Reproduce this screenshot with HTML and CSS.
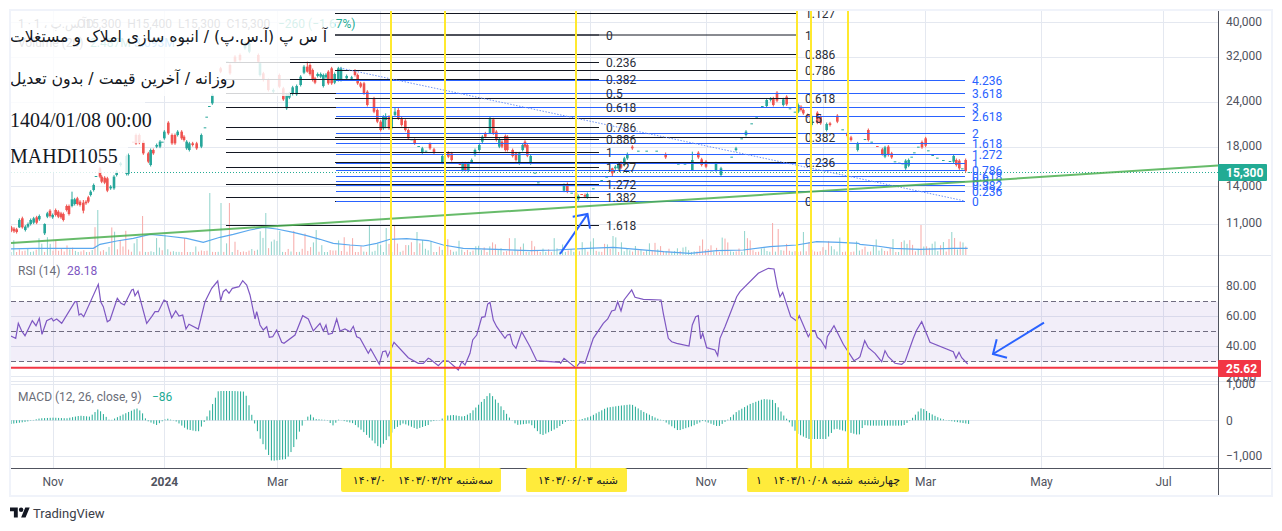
FILE: index.html
```html
<!DOCTYPE html>
<html lang="en">
<head>
	<meta charset="UTF-8">
	<title>TradingView chart</title>
	<link rel="stylesheet" href="styles.css">
</head>
<body>
	<div class="page">
		<div class="chart">
			<svg class="plot" id="plot" width="1260" height="484" viewBox="11 11 1260 484">
				<g id="grid"></g>
				<rect class="rsi-band" x="11" y="301.5" width="1207.5" height="60"></rect>
				<line class="rsi-dash" x1="11" x2="1218" y1="301.5" y2="301.5"></line>
				<line class="rsi-dash" x1="11" x2="1218" y1="331.5" y2="331.5"></line>
				<line class="rsi-dash" x1="11" x2="1218" y1="361.5" y2="361.5"></line>
				<g id="volume"></g>
				<polyline class="vol-ma" id="volma"></polyline>
				<polyline class="rsi-line" id="rsi"></polyline>
				<g id="macd"></g>
				<line class="last-price" x1="11" x2="1218" y1="172.5" y2="172.5"></line>
				<g id="candles"></g>

				<text class="legend" x="18" y="28">آ.س.پ ، 1 · 1D</text>
				<text class="legend" x="77" y="28">O15,300  H15,400  L15,300  C15,300</text>
				<text class="legend green" x="278" y="28">−260 (−1.67%)</text>
				<text class="legend" x="18" y="47">Volume (20)</text>
				<text class="legend green" x="90" y="47">2.487M</text>
				<text class="legend blue" x="134" y="47">3.093M</text>
				<text class="legend" x="18" y="275">RSI (14)</text>
				<text class="legend purple" x="67" y="275">28.18</text>
				<text class="legend" x="18" y="401">MACD (12, 26, close, 9)</text>
				<text class="legend green" x="152" y="401">−86</text>

				<g id="fibs"></g>
				<rect class="veil" x="11" y="11" width="324" height="39"></rect>
				<rect class="veil" x="11" y="50" width="279" height="46"></rect>
				<rect class="veil" x="11" y="96" width="134" height="47"></rect>
				<rect class="veil" x="11" y="143" width="117" height="30"></rect>
				<g id="fiblabels"></g>

				<line class="trend" x1="340" y1="68" x2="965" y2="201"></line>
				<line class="support" x1="11" y1="243" x2="1218" y2="165.6"></line>
				<polyline class="arrow" points="560,254 587.5,214"></polyline>
				<polyline class="arrow" points="572.7,216.7 587.5,214 590,228.7"></polyline>
				<polyline class="arrow" points="1044,322.7 993,354"></polyline>
				<polyline class="arrow" points="996.7,339.3 993,354 1007,357.7"></polyline>

				<line class="marker" x1="391" x2="391" y1="11" y2="469"></line>
				<line class="marker" x1="445" x2="445" y1="11" y2="469"></line>
				<line class="marker" x1="576" x2="576" y1="11" y2="469"></line>
				<line class="marker" x1="797" x2="797" y1="11" y2="469"></line>
				<line class="marker" x1="811" x2="811" y1="11" y2="469"></line>
				<line class="marker" x1="848" x2="848" y1="11" y2="469"></line>

				<line class="rsi-limit" x1="11" x2="1218" y1="367.8" y2="367.8"></line>

				<text class="note rtl" x="327" y="42" textLength="317" lengthAdjust="spacingAndGlyphs">آ س پ (آ.س.پ) / انبوه سازی املاک و مستغلات</text>
				<text class="note rtl" x="235" y="84" textLength="225" lengthAdjust="spacingAndGlyphs">روزانه / آخرین قیمت / بدون تعدیل</text>
				<text class="note" x="10" y="127">1404/01/08 00:00</text>
				<text class="note" x="10" y="163">MAHDI1055</text>

				<line class="axis" x1="11" x2="1271" y1="468.5" y2="468.5"></line>
				<line class="axis" x1="1218.5" x2="1218.5" y1="11" y2="495"></line>

				<text class="tick mid" x="53" y="486">Nov</text>
				<text class="tick mid strong" x="164.5" y="486">2024</text>
				<text class="tick mid" x="277.5" y="486">Mar</text>
				<text class="tick mid" x="706" y="486">Nov</text>
				<text class="tick mid" x="925.5" y="486">Mar</text>
				<text class="tick mid" x="1041.5" y="486">May</text>
				<text class="tick mid" x="1163.5" y="486">Jul</text>

				<rect class="date-box" x="341" y="468" width="160" height="24" rx="2"></rect>
				<rect class="date-box" x="526" y="468" width="101" height="24" rx="2"></rect>
				<rect class="date-box" x="747" y="468" width="162" height="24" rx="2"></rect>
				<text class="date rtl" x="386" y="484">۱۴۰۳/۰</text>
				<text class="date rtl" x="493" y="484">سه‌شنبه ۱۴۰۳/۰۳/۲۲</text>
				<text class="date rtl" x="618" y="484">شنبه ۱۴۰۳/۰۶/۰۳</text>
				<text class="date rtl" x="762" y="484">۱</text>
				<text class="date rtl" x="853" y="484">شنبه ۱۴۰۳/۱۰/۰۸</text>
				<text class="date rtl" x="900" y="484">چهارشنبه</text>

				<text class="tick" x="1226" y="26">40,000</text>
				<text class="tick" x="1226" y="60">32,000</text>
				<text class="tick" x="1226" y="105">24,000</text>
				<text class="tick" x="1226" y="150">18,000</text>
				<text class="tick" x="1226" y="190">14,000</text>
				<text class="tick" x="1226" y="227">11,000</text>
				<text class="tick" x="1226" y="290">80.00</text>
				<text class="tick" x="1226" y="320">60.00</text>
				<text class="tick" x="1226" y="350">40.00</text>
				<text class="tick" x="1226" y="382">20.00</text>
				<text class="tick" x="1226" y="388">1,000</text>
				<text class="tick" x="1226" y="425">0</text>
				<text class="tick" x="1226" y="460">−1,000</text>

				<rect class="price-tag" x="1218" y="164" width="49" height="17" rx="1"></rect>
				<text class="tag-text" x="1226" y="176.5">15,300</text>
				<rect class="rsi-tag" x="1218" y="360" width="43" height="17" rx="1"></rect>
				<text class="tag-text" x="1226" y="373">25.62</text>
			</svg>
		</div>
		<div class="footer">
			<svg class="logo" width="20" height="16" viewBox="0 0 36 28">
				<path d="M14 22H7V11H0V4h14v18zM28 22h-8l7.5-18h8L28 22z"></path>
				<circle cx="20" cy="8" r="4"></circle>
			</svg>
			<span class="brand">TradingView</span>
		</div>
	</div>
	<script src="chart.js"></script>
</body>
</html>
```

FILE: styles.css
```css
*{margin: 0px; padding: 0px;}
body{
	background-color: #fff;
	font-family: Roboto, 'DejaVu Sans', sans-serif;
}
.page{
	padding: 9px 9px 0;
}
.chart{
	box-sizing: border-box;
	width: 1264px;
	height: 488px;
	border: 2px solid #f0f3fa;
}
.plot{
	display: block;
	overflow: hidden;
}
.footer{
	display: flex;
	align-items: center;
	gap: 3px;
	margin-top: 8px;
	padding-left: 1px;
}
.logo{
	fill: #131722;
}
.brand{
	font-size: 13px;
	color: #3b3e48;
}

/* panes */
.grid-line{
	stroke: #e4e8f0;
	stroke-width: 1;
}
.rsi-band{
	fill: #7e57c2;
	fill-opacity: .1;
}
.rsi-dash{
	stroke: #706c80;
	stroke-width: 1;
	stroke-dasharray: 5 3;
}
.rsi-line{
	fill: none;
	stroke: #7e57c2;
	stroke-width: 1.2;
}
.rsi-limit{
	stroke: #f23645;
	stroke-width: 2;
}
.vol-ma{
	fill: none;
	stroke: #5ba8ee;
	stroke-width: 1.2;
}
.last-price{
	stroke: #22ab94;
	stroke-width: 1;
	stroke-dasharray: 1 2;
}
.axis{
	stroke: #50535e;
	stroke-width: 1;
}
.veil{
	fill: #fff;
	fill-opacity: .82;
}

/* drawings */
.fib-black{
	stroke: #131722;
	stroke-width: 1;
}
.fib-blue{
	stroke: #2962ff;
	stroke-width: 1;
}
.trend{
	stroke: #6f93f5;
	stroke-width: 1;
	stroke-dasharray: 1.5 1.5;
}
.support{
	stroke: #4caf50;
	stroke-width: 2;
	stroke-opacity: .85;
}
.arrow{
	fill: none;
	stroke: #2962ff;
	stroke-width: 2;
}
.marker{
	stroke: #ffe92f;
	stroke-width: 2;
}

/* text */
text{
	font-family: Roboto, 'DejaVu Sans', sans-serif;
	font-size: 12px;
	white-space: pre;
}
.legend{
	fill: #6a6d78;
}
.legend.green{
	fill: #22ab94;
}
.legend.blue{
	fill: #2196f3;
}
.legend.purple{
	fill: #7e57c2;
}
.fib-text{
	fill: #2a2e39;
}
.fib-text.blue{
	fill: #2962ff;
}
.note{
	font-family: 'Liberation Serif', 'DejaVu Sans', serif;
	font-size: 20px;
	fill: #131722;
}
.note.rtl{
	font-family: 'DejaVu Sans', serif;
	font-size: 16px;
}
.rtl{
	direction: rtl;
}
.tick{
	fill: #50535e;
}
.tick.mid{
	text-anchor: middle;
}
.tick.strong{
	font-weight: 700;
}
.date-box{
	fill: #ffeb3b;
}
.date{
	font-family: 'DejaVu Sans', serif;
	font-size: 11px;
	fill: #131722;
}
.price-tag{
	fill: #22ab94;
}
.rsi-tag{
	fill: #f23645;
}
.tag-text{
	fill: #fff;
	font-weight: 700;
}
```

FILE: chart.js
```js
var NS='http://www.w3.org/2000/svg';

function add(parent,tag,attrs,text){
	var el=document.createElementNS(NS,tag);
	for(var k in attrs){
		el.setAttribute(k,attrs[k]);
	}
	if(text!==undefined){
		el.textContent=text;
	}
	document.getElementById(parent).appendChild(el);
	return el;
}

//1.grid
var vgrid=[53.5,164.5,277.5,380.5,479.5,590.5,706.5,823.5,925.5,1041.5,1163.5];
var hgrid=[22.5,57.5,102.5,147.5,186.5,224.5,286.5,316.5,346.5,376.5,384.5,420.5,456.5];
var seps=[255.5,381.5];
vgrid.forEach(function(x){
	add('grid','line',{'class':'grid-line',x1:x,x2:x,y1:11,y2:468});
});
hgrid.forEach(function(y){
	add('grid','line',{'class':'grid-line',x1:11,x2:1218,y1:y,y2:y});
});
seps.forEach(function(y){
	add('grid','line',{'class':'grid-line',x1:11,x2:1271,y1:y,y2:y});
});

//2.fib levels: [y, label]
var fibA=[[35,'0'],[62.5,'0.236'],[79.5,'0.382'],[93.5,'0.5'],[107.5,'0.618'],[127.5,'0.786'],[139.5,'0.886'],[152.5,'1'],[167.5,'1.127'],[184.5,'1.272'],[197.5,'1.382'],[225.5,'1.618']];
var fibB=[[13.5,'1.127'],[35,'1'],[54.5,'0.886'],[70.5,'0.786'],[98.5,'0.618'],[118.5,'0.5'],[137.5,'0.382'],[162.5,'0.236'],[201.5,'0']];
var fibC=[[80.5,'4.236'],[93.5,'3.618'],[107.5,'3'],[116.5,'2.618'],[133.5,'2'],[143.5,'1.618'],[154.5,'1.272'],[163.5,'1'],[170.5,'0.786'],[176.5,'0.618'],[181.5,'0.5'],[185.5,'0.382'],[191.5,'0.236'],[201.5,'0']];

fibA.forEach(function(f){
	var from=f[0]==35?335:226;
	add('fibs','line',{'class':'fib-black',x1:from,x2:599,y1:f[0],y2:f[0]});
	add('fiblabels','text',{'class':'fib-text',x:606,y:f[0]+4.5},f[1]);
});
fibB.forEach(function(f){
	add('fibs','line',{'class':'fib-black',x1:335,x2:797,y1:f[0],y2:f[0]});
	add('fiblabels','text',{'class':'fib-text',x:805,y:f[0]+4.5},f[1]);
});
fibC.forEach(function(f){
	add('fibs','line',{'class':'fib-blue',x1:336,x2:965,y1:f[0],y2:f[0]});
	add('fiblabels','text',{'class':'fib-text blue',x:972,y:f[0]+4.5},f[1]);
});

//3.candles, read off a 3x crop: [x, open, close, high, low]
var candleGroups=[
	{ox:0,bars:[[34,682,692],[42,686,694],[50,688,696],[58,682,660,655,684],[67,655,682,650,686],[76,690,680],[84,680,672],[92,672,660],[101,668,655],[110,652,668],[118,658,648],[134,700,672,670,705],[142,650,640],[150,632,648],[158,652,645],[167,630,645],[175,635,650],[183,640,652],[190,642,660],[200,618,630],[207,618,642],[216,618,598,575,622],[224,612,598],[232,595,612],[240,605,615],[250,608,632,600,640],[258,605,610],[265,592,605],[272,585,575],[281,570,555],[288,530,528],[300,505,530],[305,530,545],[314,533,548],[322,535,572],[332,565,560],[342,565,530],[350,525,515],[362,495,490],[380,522,468],[385,522,465],[400,425,428],[408,405,430],[418,405,428],[430,425,460],[445,460,485],[452,495,450],[460,450,460],[470,440,435],[480,440,425],[487,428,425],[493,415,395],[505,368,400],[516,405,430],[525,405,430],[533,405,395],[545,395,415],[552,410,420],[560,445,425],[568,450,430],[578,430,435],[590,430,445],[604,440,405],[615,382,382],[620,350,350],[628,318,318],[637,310,285],[650,240,240],[662,205,215],[682,185,185],[690,195,220],[705,170,185],[720,165,180],[735,145,130],[748,155,130],[775,165,185],[780,225,190],[790,220,240],[805,240,270],[820,275,270],[838,225,260],[850,265,298],[860,325,283],[868,293,280],[878,282,262],[890,283,258],[902,255,230],[912,218,200],[922,200,215,185,218],[930,195,222],[938,210,240],[945,235,248],[953,228,222],[962,230,222],[970,258,225],[978,232,224],[985,215,250],[995,205,250],[1004,248,222],[1015,240,205],[1023,240,205],[1040,235,228],[1055,236,232],[1065,212,225],[1073,225,250],[1082,250,260],[1092,250,280],[1102,275,315],[1122,295,335],[1132,330,365],[1142,365,390],[1150,385,350],[1157,360,350,340,385],[1167,350,385],[1175,385,350],[1185,345,335,322,350],[1195,330,355,322,360],[1205,355,375],[1216,362,390],[1225,390,415],[1235,421,418],[1244,420,430],[1256,438,438],[1267,457,445],[1278,452,452]]},
	{ox:430,bars:[[0,432,445],[12,448,458],[22,462,462],[37,488,468],[55,458,470],[65,460,480],[78,488,488],[90,492,495],[98,510,490],[106,490,510],[115,512,490],[125,487,480],[135,465,450],[148,450,435],[157,425,410],[166,400,410],[180,400,355,350,402],[190,358,400],[199,395,420],[208,440,418],[216,425,440],[226,408,450],[232,410,450],[248,450,468],[258,460,480],[268,490,460],[278,450,435],[285,425,440],[292,435,467],[302,490,468],[315,518,518],[325,547,547],[345,555,555],[365,555,555],[385,555,555],[402,572,555],[412,552,575],[425,578,578],[438,578,598],[445,598,588],[455,582,584],[465,585,590],[472,592,582],[490,565,565],[500,552,552],[515,540,540],[530,530,530],[547,505,520,503,530],[556,505,500],[565,505,490],[573,488,503],[583,495,475],[592,475,462],[607,440,445],[625,452,452],[650,452,452],[680,452,452],[707,462,472],[720,488,488],[745,491,491],[765,491,491],[787,510,480,455,512],[805,458,472],[815,478,495],[828,485,500],[845,511,511],[858,511,490],[873,525,505],[890,487,487],[905,470,470],[918,450,445],[935,415,415],[948,405,395],[965,370,370],[980,350,350],[997,318,318],[1010,318,300],[1022,300,296],[1030,295,315],[1041,278,302],[1060,315,298],[1070,290,313],[1080,325,325],[1095,335,335],[1105,335,315],[1113,320,330],[1120,330,340],[1133,345,350],[1145,375,350],[1162,338,368],[1172,350,370],[1190,390,372],[1200,370,375],[1215,350,348],[1222,347,365],[1238,388,388],[1252,400,408],[1263,412,420],[1283,450,430]]},
	{ox:860,bars:[[15,417,417],[25,390,420],[35,425,425],[52,438,440],[67,448,462],[75,470,442],[85,440,465],[95,460,472],[105,484,484],[118,488,488],[128,493,490],[137,505,482],[146,497,480],[155,470,470],[163,457,457],[175,440,440],[186,426,442],[197,415,437],[205,451,451],[218,465,465],[232,473,473],[250,480,480],[270,483,483],[281,485,468],[289,480,495],[298,482,505],[307,507,505],[317,480,513],[327,516,516]]}
];
candleGroups.forEach(function(g){
	g.bars.forEach(function(b){
		var x=g.ox+b[0]/3;
		var top=Math.min(b[1],b[2])/3;
		var bottom=Math.max(b[1],b[2])/3;
		var color=b[2]<=b[1]?'#26a69a':'#ef5350';
		var high=b[3]?b[3]/3:top-1.5;
		var low=b[4]?b[4]/3:bottom+1.5;
		if(bottom-top>1){
			add('candles','line',{x1:x,x2:x,y1:high,y2:low,stroke:color,'stroke-width':1});
		}
		add('candles','rect',{x:x-1.3,y:top,width:2.6,height:Math.max(bottom-top,1),fill:color});
	});
});

//4.volume and its average
var spikes={98:210,210:193,220:203,230:203,143:216,266:213,368:226,387:228,394:225,418:232,613:236,745:231,772:223,779:229,802:232,922:225,953:232};
function noise(i){
	var s=Math.sin(i*12.9898)*43758.5453;
	return s-Math.floor(s);
}
for(var i=0;i<342;i++){
	var vx=11+i*2.8;
	var n=noise(i);
	var amp=vx>90&&vx<330?26:15;
	var vtop=254-(2+n*n*n*amp);
	for(var sx in spikes){
		if(Math.abs(sx-vx)<1.4){
			vtop=spikes[sx];
		}
	}
	add('volume','line',{x1:vx,x2:vx,y1:vtop,y2:255,'stroke-width':1,stroke:noise(i+500)>.5?'#8fd3cb':'#f7a9a7'});
}

function toPoints(groups,oy){
	var pts=[];
	groups.forEach(function(g){
		for(var i=0;i<g.p.length;i+=2){
			pts.push([g.ox+g.p[i]/3,oy+g.p[i+1]/3]);
		}
	});
	return pts;
}
function pointsAttr(pts){
	return pts.map(function(p){return p[0].toFixed(1)+','+p[1].toFixed(1);}).join(' ');
}

var volma=[
	{ox:0,p:[30,747,100,745,200,745,280,745,300,733,350,723,400,715,450,703,500,708,560,715,610,727,660,712,700,703,750,690,790,682,830,687,880,697,920,707,960,718,1000,730,1050,735,1090,738,1130,730,1170,718,1220,716,1285,722]},
	{ox:430,p:[0,723,40,735,100,745,200,748,300,752,380,750,470,745,550,742,620,748,700,755,780,760,860,752,940,750,1020,740,1100,735,1160,725,1230,727,1285,730]},
	{ox:860,p:[0,733,50,738,100,745,180,748,280,745,323,745]}
];
document.getElementById('volma').setAttribute('points',pointsAttr(toPoints(volma,0)));

//5.rsi
var rsi=[
	{ox:0,p:[32,243,47,250,55,205,65,228,75,242,97,197,108,212,118,190,126,238,140,197,155,190,160,198,170,192,185,205,225,140,230,140,237,180,243,176,251,185,295,88,302,140,310,155,322,200,330,195,352,130,363,145,373,150,395,105,400,103,405,122,414,108,440,205,455,185,465,170,475,170,492,135,500,140,515,188,527,168,537,183,548,180,558,222,567,208,595,222,615,140,635,100,653,78,662,137,670,110,678,103,687,115,697,100,717,95,728,77,740,90,750,120,765,192,770,170,780,210,790,225,800,215,808,247,818,245,830,225,845,262,852,265,885,240,908,182,925,192,940,228,960,205,970,228,978,210,985,238,997,235,1010,192,1020,228,1035,222,1050,230,1060,214,1070,245,1080,250,1105,295,1112,282,1138,328,1148,290,1157,288,1163,305,1182,262,1225,308,1255,325,1270,325,1285,310]},
	{ox:430,p:[0,312,25,332,40,317,55,318,85,345,95,320,105,330,120,295,128,255,140,240,155,187,165,185,173,147,180,142,190,195,200,215,225,250,232,240,240,238,248,268,258,280,275,230,300,275,320,317,390,322,392,325,402,310,437,338,450,322,465,325,490,250,520,205,533,192,545,168,555,165,563,140,573,168,582,135,605,105,615,127,640,133,693,135,700,175,715,250,725,260,740,265,777,273,787,210,797,185,805,182,812,252,818,235,830,278,855,285,863,302,870,250,885,215,920,125,930,110,985,55,1015,40,1032,42,1042,95,1050,125,1058,112,1082,185,1100,198,1108,182,1135,245,1145,227,1155,227,1162,247,1172,255,1187,280,1192,245,1212,212,1240,268,1272,317,1285,310]},
	{ox:860,p:[0,305,14,257,25,278,45,295,65,320,75,287,85,305,105,325,125,328,135,320,160,250,170,225,185,200,210,262,280,290,288,310,297,292,305,308,323,327]}
];
document.getElementById('rsi').setAttribute('points',pointsAttr(toPoints(rsi,255)));

//6.macd histogram, the tips between two key points are interpolated
var macd=[
	{ox:0,p:[32,507,80,500,120,490,160,488,200,490,240,482,270,485,295,462,330,497,345,490,370,478,410,460,425,470,440,497,470,510,500,490,530,500,560,523,595,530,615,497,630,465,655,408,700,408,735,410,760,495,780,550,815,618,860,612,880,580,900,525,915,495,930,477,945,492,980,495,1000,512,1015,494,1060,505,1090,530,1140,580,1170,540,1185,520,1210,505,1250,522,1285,510]},
	{ox:430,p:[0,500,30,495,50,482,70,480,100,485,120,475,150,445,180,414,210,450,240,490,260,510,300,505,335,542,380,520,410,498,440,497,480,485,530,458,570,452,605,448,640,470,680,490,700,497,745,527,790,512,820,497,865,515,890,497,920,470,960,447,1000,432,1030,435,1060,480,1075,497,1100,535,1135,552,1190,552,1215,520,1250,530,1285,540]},
	{ox:860,p:[0,537,10,510,30,512,130,512,150,497,185,458,210,475,240,490,265,497,327,507]}
];
var tips=toPoints(macd,255);
var seg=0;
for(var mx=11;mx<969.5;mx+=2.8){
	while(seg<tips.length-2&&tips[seg+1][0]<mx){
		seg++;
	}
	var a=tips[seg],b=tips[seg+1];
	var t=Math.max(0,(mx-a[0])/(b[0]-a[0]));
	var tip=a[1]+(b[1]-a[1])*t;
	add('macd','line',{x1:mx,x2:mx,y1:420.3,y2:tip,stroke:'#22ab94','stroke-width':1});
}
```
